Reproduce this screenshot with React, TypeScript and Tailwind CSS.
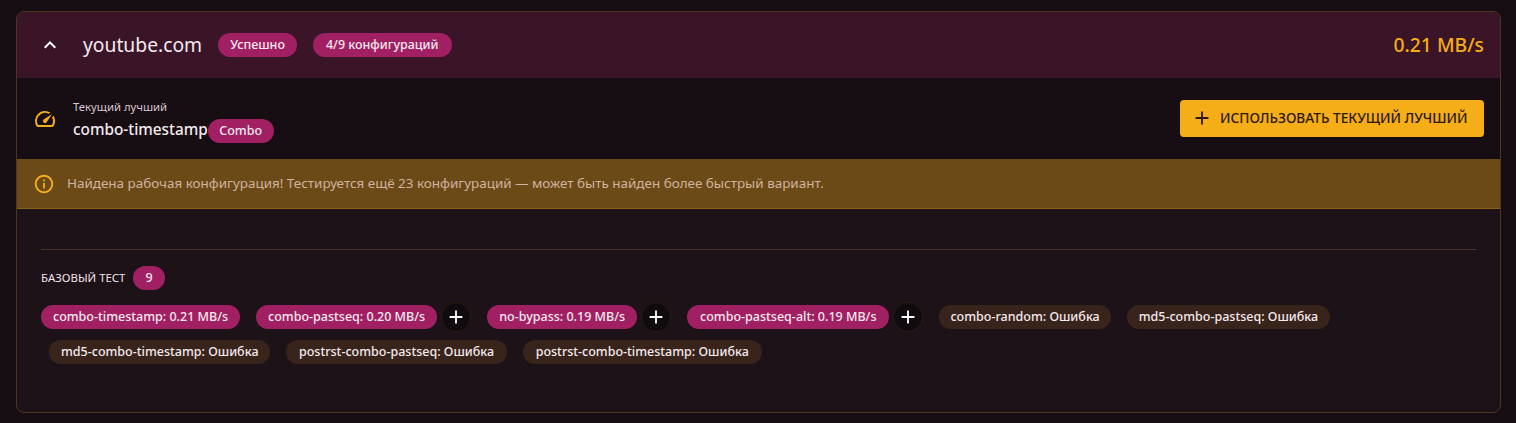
import React from "react";

const font = { fontFamily: '"Noto Sans", sans-serif' };

function Pill({ children, className = "" }: { children: React.ReactNode; className?: string }) {
  return (
    <span className={`inline-flex h-6 shrink-0 items-center rounded-full bg-[#a11f63] text-[12.5px] font-medium leading-none text-[#f4e9ee] ${className || "px-3"}`}>
      {children}
    </span>
  );
}

function Plus({ size = 18 }: { size?: number }) {
  return (
    <svg width={size} height={size} viewBox="0 0 24 24" fill="currentColor">
      <path d="M19 13h-6v6h-2v-6H5v-2h6V5h2v6h6v2z" />
    </svg>
  );
}

function AddButton() {
  return (
    <span className="ml-1 flex size-[30px] items-center justify-center rounded-full border border-[#2a1c10] bg-[#0f0b0e] text-white">
      <Plus size={22} />
    </span>
  );
}

function ErrorChip({ children, className = "px-3" }: { children: React.ReactNode; className?: string }) {
  return (
    <span className={`mx-2 inline-flex h-6 items-center rounded-full bg-[#38241b] text-[12.5px] font-medium leading-none text-[#f4e9ee] ${className}`}>
      {children}
    </span>
  );
}

export default function App() {
  return (
    <div style={font} className="min-h-[423px] bg-[#170e14] px-4 pt-[11px] text-[#f4e9ee]">
      <div className="h-[402px] w-[1485px] overflow-hidden rounded-lg border border-[#50361f] bg-[#1e1219]">
        <div className="flex h-[66px] items-center bg-[#3a1528] pl-[21px] pr-4">
          <svg width="24" height="24" viewBox="0 0 24 24" fill="#ffffff">
            <path d="M12 8l-6 6 1.41 1.41L12 10.83l4.59 4.58L18 14z" />
          </svg>
          <span className="ml-[21px] text-[19.3px] leading-none text-[#f4e9ee]">youtube.com</span>
          <Pill className="ml-4 px-3">Успешно</Pill>
          <Pill className="ml-4 px-[13px]">4/9 конфигураций</Pill>
          <span className="ml-auto text-[19.3px] font-medium leading-none text-[#f5ad18]">0.21 MB/s</span>
        </div>

        <div className="flex h-[81px] items-center bg-[#170e14] pl-4 pr-4">
          <svg width="24" height="24" viewBox="0 0 24 24" fill="#f5ad18">
            <path d="M20.38 8.57l-1.23 1.85a8 8 0 0 1-.22 7.58H5.07A8 8 0 0 1 15.58 6.85l1.85-1.23A10 10 0 0 0 3.35 19a2 2 0 0 0 1.72 1h13.85a2 2 0 0 0 1.74-1 10 10 0 0 0-.27-10.44z" />
            <path d="M10.59 15.41a2 2 0 0 0 2.83 0l5.66-8.49-8.49 5.66a2 2 0 0 0 0 2.83z" />
          </svg>
          <div className="ml-4 pt-[5px]">
            <div className="text-[11.3px] leading-4 text-[#d9c6cf]">Текущий лучший</div>
            <div className="mt-[2px] flex h-[26px] items-end">
              <span className="self-start text-[15.35px] font-medium leading-6 text-[#f4e9ee]">combo-timestamp</span>
              <Pill className="px-[11.5px]">Combo</Pill>
            </div>
          </div>
          <button className="ml-auto flex h-[37px] w-[304px] items-center gap-[7px] rounded bg-[#f5ad18] pb-[2px] pl-[11px] text-[13.7px] font-medium leading-none text-[#2b1a10]">
            <Plus size={22} />
            ИСПОЛЬЗОВАТЬ ТЕКУЩИЙ ЛУЧШИЙ
          </button>
        </div>

        <div className="flex h-[50px] items-center border-b border-[#8a6118] bg-[#6c4a18] pl-4 text-[13.44px] text-[#cfb39f]">
          <svg width="22" height="22" viewBox="0 0 24 24" fill="#f5ad18">
            <path d="M11 7h2v2h-2zm0 4h2v6h-2zm1-9C6.48 2 2 6.48 2 12s4.48 10 10 10 10-4.48 10-10S17.52 2 12 2zm0 18c-4.41 0-8-3.59-8-8s3.59-8 8-8 8 3.59 8 8-3.59 8-8 8z" />
          </svg>
          <span className="ml-3">Найдена рабочая конфигурация! Тестируется ещё 23 конфигураций — может быть найден более быстрый вариант.</span>
        </div>

        <div className="px-6 pt-10">
          <div className="border-t border-[#4a3326]" />
          <div className="mt-4 flex items-center">
            <span className="text-[11.4px] uppercase leading-none text-[#f0e4ea]">Базовый тест</span>
            <Pill className="ml-2 px-3">9</Pill>
          </div>
          <div className="mt-3 flex flex-wrap items-center gap-y-2">
            <Pill className="mr-2 px-3">combo-timestamp: 0.21 MB/s</Pill>
            <span className="mx-2 flex items-center"><Pill>combo-pastseq: 0.20 MB/s</Pill><AddButton /></span>
            <span className="mx-2 flex items-center"><Pill>no-bypass: 0.19 MB/s</Pill><AddButton /></span>
            <span className="mx-2 flex items-center"><Pill className="px-[13px]">combo-pastseq-alt: 0.19 MB/s</Pill><AddButton /></span>
            <ErrorChip className="px-[11px]">combo-random: Ошибка</ErrorChip>
            <ErrorChip>md5-combo-pastseq: Ошибка</ErrorChip>
            <ErrorChip>md5-combo-timestamp: Ошибка</ErrorChip>
            <ErrorChip className="px-[12.5px]">postrst-combo-pastseq: Ошибка</ErrorChip>
            <ErrorChip className="px-[13px]">postrst-combo-timestamp: Ошибка</ErrorChip>
          </div>
        </div>
      </div>
    </div>
  );
}
